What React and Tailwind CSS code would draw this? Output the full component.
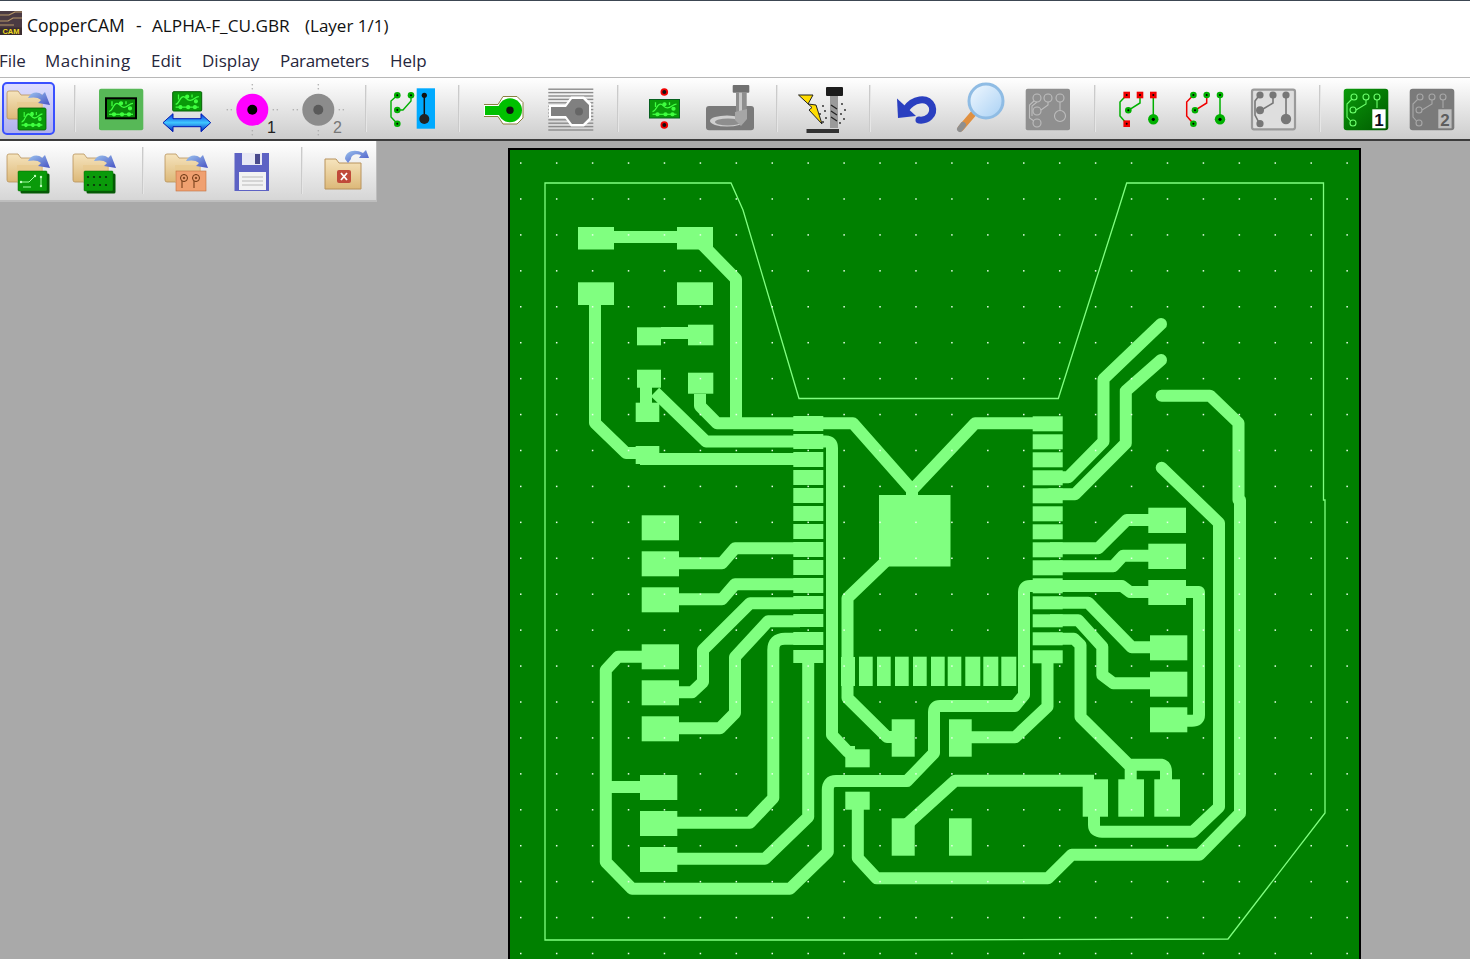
import React from "react";

const L = "#80ff80";

const traces = [
  "M595 237H695L736 279V423",
  "M595 305V423L626 453H650M640 459H800",
  "M661 333H688",
  "M646 380V412",
  "M655 392L706 441.5H800",
  "M700 394V406L717 423.3H853L912 490V497M912 490L975 423.3H1045",
  "M815 441.5H826Q832 441.5 832 448V735L848 752H855",
  "M885 562L847.5 598V698L887 737H900",
  "M679 563.3H722L735 548.3H800",
  "M679 599.3H722L735 584.3H800",
  "M679 692.3H692L703 682V650L750 603.3H800",
  "M679 728.3H720L735 713V657L768 621.3H800",
  "M677 822.7H750L773.3 798V650Q773.3 638.7 785 638.7H800",
  "M677 858.7H765L808.2 817V660",
  "M606 787H645",
  "M660 656.7H618L605.8 670V862L632 888.7H790L827.8 852V790Q827.8 781 836 781H907L934 753V712Q934 706 940 706H1015L1024 695V592Q1024 586 1030 586H1122L1130 592H1199V715Q1199 720.7 1192 720.7H1170",
  "M958 737.3H1015L1047.5 706.7V655",
  "M1050 638.7H1074L1080.5 645V717L1128.7 764.7H1161Q1166 765.8 1166 772V785M1130.7 764.7V785",
  "M1094 790V825Q1094 831.7 1102 831.7H1193L1219 807V523L1161.7 467.7",
  "M1050 477.3H1068.3L1103.5 441.5V379L1161 324",
  "M1050 494.3H1075L1125.8 443.3V391L1161 360",
  "M1050 548.3H1098.3L1126.7 520H1160",
  "M1050 566.3H1113.3L1123 555.7H1160",
  "M1050 602.7H1088.3L1131.7 647.3H1160",
  "M1050 620.3H1078.3L1102.3 646.7V675L1113.3 683.3H1160",
  "M1094 780.7H955L905 826",
  "M857.8 800V858L876.7 878.3H1048L1071.7 854.7H1199.3L1240 813.3V500L1238.5 500V423L1210 395.7H1161.7",
];

const leftSoic = [416, 434, 452, 470, 488, 506, 524, 542, 560, 578, 596, 614, 632, 650];
const heights = [15, 15, 15, 15, 15, 15, 15, 15, 15, 15, 13, 13, 13, 13];

const pads = [
  [578, 227, 36, 22.5], [677, 227, 36, 22.5], [578, 282.3, 36, 22.7], [677, 282.3, 36, 22.7],
  [637, 327.3, 24, 18], [688, 324.7, 25.3, 20.6], [637, 369.7, 24, 18], [688, 372.7, 25.3, 21],
  [635.7, 402.7, 23.6, 19.3], [635.7, 446, 23.6, 18],
  [641.7, 515.3, 37.3, 25], [641.7, 551.3, 37.3, 25], [641.7, 587.3, 37.3, 25],
  [641.7, 644.3, 37.3, 25], [641.7, 680.3, 37.3, 25], [641.7, 716.3, 37.3, 25],
  [640, 775, 37.3, 25], [640, 811, 37.3, 25], [640, 847, 37.3, 25],
  [845.3, 749.3, 24.4, 18], [845.3, 791.7, 24.4, 18],
  [879, 495, 71.5, 71.5],
  [841, 657, 14, 29],
  [859, 656.7, 13.7, 29.3], [877, 656.7, 13.7, 29.3], [895, 656.7, 13.7, 29.3], [913, 656.7, 13.7, 29.3],
  [931, 656.7, 13.7, 29.3], [947.7, 656.7, 13.6, 29.3], [965.3, 656.7, 15, 29.3], [983.3, 656.7, 15, 29.3], [1001.3, 656.7, 15, 29.3],
  [891.7, 719.3, 23, 37.4], [949, 719.3, 22.7, 37.4], [891.7, 818.3, 23, 37.4], [949, 818.3, 22.7, 37.4],
  [1082.7, 779.3, 25.3, 37.4], [1118.3, 779.3, 25.7, 37.4], [1154.3, 779.3, 25.7, 37.4],
  [1148.3, 507.7, 37.7, 25.3], [1148.3, 543.7, 37.7, 25.3], [1148.3, 580, 37.7, 25],
  [1150, 635.3, 37.3, 25], [1150, 671.7, 37.3, 25], [1150, 707.3, 37.3, 25],
];

function PcbBoard() {
  const dotsX = Array.from({ length: 24 }, (_, i) => 520.7 + i * 35.93);
  const dotsY = Array.from({ length: 23 }, (_, i) => 163 + i * 35.93);
  return (
    <svg className="block w-[849px] h-[820px]" viewBox="510 150 849 820">
      <path
        d="M545 183H731L743 210L799 398.5H1058.3L1118.3 210L1126.7 183H1323.5V500H1325V813L1228 939L885 940H545Z"
        fill="none"
        stroke={L}
        strokeWidth="1.3"
      />
      {traces.map((d, i) => (
        <path key={i} d={d} fill="none" stroke={L} strokeWidth="12" strokeLinejoin="round" strokeLinecap={i === 18 || i === 19 || i === 20 || i === 26 ? "round" : "butt"} />
      ))}
      {pads.map(([x, y, w, h], i) => (
        <rect key={i} x={x} y={y} width={w} height={h} fill={L} />
      ))}
      {leftSoic.map((y, i) => (
        <rect key={"l" + i} x={793.3} y={y} width={30} height={heights[i]} fill={L} />
      ))}
      {leftSoic.map((y, i) => (
        <rect key={"r" + i} x={1032.7} y={y + 0.3} width={30} height={heights[i]} fill={L} />
      ))}
      {dotsY.map((y) =>
        dotsX.map((x) => <rect key={x + "-" + y} x={x - 0.7} y={y - 0.7} width="1.5" height="1.5" fill="#e8ffe8" />)
      )}
    </svg>
  );
}

function Defs() {
  return (
    <svg className="block w-0 h-0">
      <defs>
        <linearGradient id="tan" x1="0" y1="0" x2="0" y2="1">
          <stop offset="0" stopColor="#f6e4bd" />
          <stop offset="1" stopColor="#dcb878" />
        </linearGradient>
        <linearGradient id="arrowb" x1="0" y1="0" x2="1" y2="1">
          <stop offset="0" stopColor="#9cc4ee" />
          <stop offset="1" stopColor="#4652c4" />
        </linearGradient>
        <linearGradient id="blueh" x1="0" y1="0" x2="0" y2="1">
          <stop offset="0" stopColor="#0030e0" />
          <stop offset="0.5" stopColor="#40c8ff" />
          <stop offset="1" stopColor="#0020c0" />
        </linearGradient>
        <linearGradient id="lens" x1="0" y1="0" x2="1" y2="1">
          <stop offset="0" stopColor="#f2f9ff" />
          <stop offset="1" stopColor="#a8d0f4" />
        </linearGradient>
        <linearGradient id="grn" x1="0" y1="0" x2="1" y2="1">
          <stop offset="0" stopColor="#0a9a0a" />
          <stop offset="1" stopColor="#005a00" />
        </linearGradient>
      </defs>
    </svg>
  );
}

/* small green circuit drawn on a board, origin x,y, 30x20 */
function Circuit({ x, y, w = 30, h = 20, stroke = "#40ff40" }) {
  return (
    <g transform={`translate(${x} ${y}) scale(${w / 30} ${h / 20})`} fill="none" stroke={stroke} strokeWidth="1.3">
      <path d="M3 13C7 13 7 5 11 5C14 5 14 9 18 9C22 9 23 5 27 5" />
      <path d="M3 16H27" />
      <path d="M6 3V8M20 3V6" />
      <circle cx="8" cy="16" r="1.5" fill={stroke} />
      <circle cx="16" cy="16" r="1.5" fill={stroke} />
      <circle cx="23" cy="16" r="1.5" fill={stroke} />
      <circle cx="15" cy="5" r="1.5" fill={stroke} />
      <circle cx="24" cy="10" r="1.5" fill={stroke} />
    </g>
  );
}

function Folder({ x, y, children }) {
  return (
    <g transform={`translate(${x} ${y})`}>
      <path d="M0 3Q0 1 2 1H11L14 5H35V29H2Q0 29 0 27Z" fill="url(#tan)" stroke="#b8935c" strokeWidth="0.8" />
      <path d="M10 12H36V29H10Z" fill="#e8c98e" opacity="0.7" />
      <path d="M21 8C24 2 31 1 35 5L38 2L43 15L31 13L34 10C31 7 26 7 21 8Z" fill="url(#arrowb)" />
      {children}
    </g>
  );
}

function Icon({ children }) {
  return (
    <svg className="block w-[66px] h-[60px]" viewBox="0 0 66 60">
      {children}
    </svg>
  );
}

function Node({ x, y, r = 3.3, fill = "#00b000", core = "#000", square, c = 1 }) {
  return (
    <g>
      {square ? <rect x={x - r} y={y - r} width={r * 2} height={r * 2} fill={fill} /> : <circle cx={x} cy={y} r={r} fill={fill} />}
      <circle cx={x} cy={y} r={c} fill={core} />
    </g>
  );
}

function Gerber({ num, main, core, text }) {
  const dots = [[0, -21], [0, -25], [0, 21], [0, 25], [-21, 0], [-25, 0], [21, 0], [25, 0]];
  return (
    <Icon>
      <g transform="translate(32.3 30.7)">
        {dots.map(([a, b], i) => (
          <circle key={i} cx={a} cy={b} r="0.8" fill="#aaa" />
        ))}
        <circle r="16" fill={main} />
        <circle r="5" fill={core} />
      </g>
      <text x="47" y="54" fontSize="16" fontFamily="'Liberation Sans', sans-serif" fill={text}>{num}</text>
    </Icon>
  );
}

function Sch({ dx = 0, mode }) {
  const red = "#f00000";
  const green = "#00b000";
  const sq = mode === "red";
  return (
    <g transform={`translate(${dx} 0)`} fill="none">
      <path d="M18.7 16L12 23V37L18.7 44.7" stroke={mode === "left" ? red : green} strokeWidth="1.5" />
      <path d="M32 16V24L20.3 31.3" stroke={mode === "left" ? red : green} strokeWidth="1.5" />
      <path d="M45.3 16V40" stroke={green} strokeWidth="1.5" />
      <Node x={18.7} y={16} square={sq} fill={sq ? red : green} />
      <Node x={32} y={16} square={sq} fill={sq ? red : green} />
      <Node x={45.3} y={16} square={sq} fill={sq ? red : green} />
      <Node x={20.3} y={31.3} />
      <Node x={18.7} y={44.7} square={sq} fill={sq ? red : green} />
      <Node x={45.3} y={40.3} r={5.2} c={1.6} />
    </g>
  );
}

function LayerIcon({ bg, line, box, num, numColor }) {
  return (
    <Icon>
      <rect x="10.7" y="9.7" width="44.6" height="41.6" rx="3" fill={bg} />
      <g fill="none" stroke={line} strokeWidth="1.1">
        <circle cx="21" cy="18" r="3" />
        <circle cx="33" cy="18" r="3" />
        <circle cx="44" cy="18" r="3" />
        <circle cx="20" cy="31" r="3" />
        <circle cx="20" cy="44" r="3" />
        <path d="M18.5 20.5L14 25V38L17.5 42M33 21V25L23 31M44 21V29" />
      </g>
      <rect x="39.3" y="30.3" width="13.3" height="19" fill={box} />
      <text x="46" y="46.5" textAnchor="middle" fontSize="17" fontWeight="700" fontFamily="'Liberation Sans', sans-serif" fill={numColor}>{num}</text>
    </Icon>
  );
}

function Sep({ w = "w-[27px]", extra = "justify-center", h = "h-[47px]" }) {
  return (
    <div className={`${w} ${extra} flex shrink-0`}>
      <div className={`w-[2px] ${h} bg-gradient-to-r from-[#bdbdbd] to-[#f4f4f4]`} />
    </div>
  );
}

function Btn({ children, active }) {
  if (active)
    return (
      <div className="w-[66px] h-[60px] shrink-0 flex items-center justify-center">
        <div className="w-[53px] h-[53px] rounded-[5px] border-2 border-[#3a50ff] bg-gradient-to-b from-[#dedeff] to-[#b0b0ec] flex items-center justify-center overflow-hidden">
          {children}
        </div>
      </div>
    );
  return <div className="w-[66px] h-[60px] shrink-0">{children}</div>;
}

function TopToolbar() {
  return (
    <div className="h-[64px] border-t border-[#b8b8b8] border-b-2 border-b-[#3c3c3c] bg-gradient-to-b from-[#ffffff] to-[#cdcdcd] flex items-center shrink-0 overflow-hidden">
      <div className="flex items-center -ml-[5px]">
        <Btn active>
          <svg className="block w-[49px] h-[49px]" viewBox="0 0 49 49">
            <Folder x={3} y={6}>
              <rect x="11" y="18" width="28" height="22" rx="1.5" fill="#0a9a0a" stroke="#065d06" strokeWidth="0.8" />
              <Circuit x={12} y={19} w={26} h={20} />
            </Folder>
          </svg>
        </Btn>
        <Sep />
        <Btn>
          <Icon>
            <rect x="11" y="9.7" width="44.3" height="41.6" rx="2" fill="#57b857" />
            <rect x="18" y="19.3" width="30" height="20" fill="#0a8a0a" stroke="#000" strokeWidth="2" />
            <Circuit x={18} y={19.3} />
          </Icon>
        </Btn>
        <Btn>
          <Icon>
            <rect x="18.7" y="12.7" width="29" height="19.3" rx="1" fill="#0a9a0a" stroke="#056005" />
            <Circuit x={18.7} y={12.7} w={29} h={19.3} />
            <path d="M9 43.7L19 34.7V39.7H47V34.7L56.7 43.7L47 52.7V47.7H19V52.7Z" fill="url(#blueh)" stroke="#0018b0" strokeWidth="1" />
          </Icon>
        </Btn>
        <Btn>
          <Gerber num="1" main="#ff00ff" core="#000" text="#222" />
        </Btn>
        <Btn>
          <Gerber num="2" main="#8c8c8c" core="#5a5a5a" text="#777" />
        </Btn>
        <Sep />
        <Btn>
          <Icon>
            <rect x="37.7" y="9.3" width="18.3" height="40.4" fill="#00aaff" />
            <path d="M45.3 16V40" stroke="#111" strokeWidth="1.5" />
            <circle cx="45.3" cy="16.3" r="2.6" fill="#111" />
            <circle cx="45.3" cy="40" r="5" fill="#222" />
            <g fill="none" stroke="#00b000" strokeWidth="1.4">
              <path d="M18.3 16.3L12 22V38L18.3 44.7" />
              <path d="M32 16.3V22L24 31H18.3" />
            </g>
            <Node x={18.3} y={16.3} />
            <Node x={32} y={16.3} />
            <Node x={18.3} y={31} />
            <Node x={18.3} y={44.7} />
          </Icon>
        </Btn>
        <Sep />
        <Btn>
          <Icon>
            <path d="M12 25.5H26L31 17.5H45L51 23.5V39L45 45H31L26 37.5H12" fill="#fff" stroke="#8a8040" strokeWidth="1" />
            <rect x="13" y="27" width="16" height="9" fill="#00c000" />
            <circle cx="38" cy="31.3" r="12" fill="#00c000" />
            <circle cx="38" cy="31.3" r="3.7" fill="#111" />
          </Icon>
        </Btn>
        <Btn>
          <Icon>
            {[0, 1, 2, 3, 4, 5, 6, 7, 8, 9, 10, 11, 12].map((i) => (
              <rect key={i} x="10.3" y={9.5 + i * 3.4} width="45" height="1.4" fill="#8c8c8c" />
            ))}
            <path d="M11 26H27L33 17.5H46L53 24V41L46 47.5H33L27 39H11Z" fill="#fff" />
            <path d="M13 28H28L34 20H45L51 26V39L45 45H34L28 37H13Z" fill="#808080" />
            <circle cx="41" cy="32.5" r="4" fill="#666" />
          </Icon>
        </Btn>
        <Sep />
        <Btn>
          <Icon>
            <rect x="18.5" y="20.5" width="30" height="18.5" fill="#0a9a0a" stroke="#06601f" />
            <Circuit x={18.5} y={20.5} w={30} h={18.5} />
            <circle cx="33.3" cy="13" r="3.8" fill="#f00000" />
            <circle cx="33.3" cy="13" r="2" fill="#111" />
            <circle cx="33.3" cy="46" r="3.8" fill="#f00000" />
            <circle cx="33.3" cy="46" r="2" fill="#111" />
          </Icon>
        </Btn>
        <Btn>
          <Icon>
            <rect x="9" y="27" width="48" height="24.3" rx="3" fill="#7a7a7a" />
            <ellipse cx="30" cy="42" rx="17" ry="5.5" fill="#cfcfcf" />
            <ellipse cx="31" cy="43" rx="13" ry="3.5" fill="#8e8e8e" />
            <rect x="35.7" y="6" width="16.6" height="7.7" rx="1" fill="#707070" />
            <rect x="39" y="13.7" width="10.7" height="25" fill="#8e8e8e" />
            <rect x="42" y="13.7" width="3" height="25" fill="#c8c8c8" />
            <path d="M38 33L50 30V40L44 47L38 41Z" fill="#a6a6a6" />
          </Icon>
        </Btn>
        <Sep />
        <Btn>
          <Icon>
            <path d="M8.5 16H23L18 25L26 26L32 45L19 31L22 28.5Z" fill="#ffdc00" stroke="#222" strokeWidth="1" />
            <rect x="36" y="8" width="17" height="9" rx="1" fill="#1c1c1c" />
            <rect x="40" y="17" width="8" height="32" fill="#9a9a9a" />
            <path d="M41 26L47 30M41 32L47 36M41 38L47 42" stroke="#222" strokeWidth="1.2" />
            <rect x="16.5" y="50" width="32.5" height="4" fill="#333" />
            {[[33, 27], [35, 32], [30, 35], [36, 39], [33, 43], [52, 25], [55, 31], [51, 35], [54, 40], [50, 44]].map(([a, b], i) => (
              <circle key={i} cx={a} cy={b} r="0.9" fill="#222" />
            ))}
          </Icon>
        </Btn>
        <Sep />
        <Btn>
          <Icon>
            <path d="M23 30C30 20 44 17 49 27C52 36 44 42 36 41" fill="none" stroke="#2a3fc0" strokeWidth="7" strokeLinecap="round" />
            <path d="M14 19.5L15 39L33 37Z" fill="#2a3fc0" />
          </Icon>
        </Btn>
        <Btn>
          <Icon>
            <path d="M24 35L12 49" stroke="#e09040" strokeWidth="6.5" strokeLinecap="round" />
            <path d="M14 46L11 50" stroke="#8f8f8f" strokeWidth="6" strokeLinecap="round" />
            <circle cx="37" cy="22" r="17" fill="url(#lens)" stroke="#8fbce4" strokeWidth="3" />
          </Icon>
        </Btn>
        <Btn>
          <Icon>
            <rect x="10.7" y="9.7" width="44.3" height="41.6" rx="2" fill="#8f8f8f" />
            <g fill="none" stroke="#bdbdbd" strokeWidth="1.1">
              <circle cx="22" cy="19" r="4" />
              <circle cx="33" cy="19" r="4" />
              <circle cx="45" cy="19" r="4" />
              <circle cx="22" cy="32" r="4" />
              <circle cx="22" cy="44" r="4" />
              <circle cx="45" cy="37" r="5.5" />
              <path d="M19 22L14.5 26V39L19 42M33 23V26L26 31M45 23V31" />
              <path d="M22 23L17 27V37" />
            </g>
          </Icon>
        </Btn>
        <Sep />
        <Btn>
          <Icon>
            <Sch mode="red" />
          </Icon>
        </Btn>
        <Btn>
          <Icon>
            <Sch mode="left" dx={0.7} />
          </Icon>
        </Btn>
        <Btn>
          <Icon>
            <rect x="12" y="10.7" width="43" height="39.6" rx="2" fill="#dedede" stroke="#9a9a9a" strokeWidth="2.2" />
            <g fill="none" stroke="#777" strokeWidth="1.6">
              <path d="M19.5 16L15 22V36L19.5 44.7" />
              <path d="M33 16V24L21 31.3" />
              <path d="M46 16V40" />
            </g>
            <g fill="#777">
              <circle cx="20" cy="16" r="3.6" />
              <circle cx="33" cy="16" r="3.6" />
              <circle cx="46" cy="16" r="3.6" />
              <circle cx="20" cy="31.3" r="4" />
              <circle cx="20" cy="44.7" r="3.6" />
              <circle cx="46" cy="40" r="5.2" />
            </g>
          </Icon>
        </Btn>
        <Sep />
        <Btn>
          <LayerIcon bg="url(#grn)" line="#6cff6c" box="#ffffff" num="1" numColor="#0b0b20" />
        </Btn>
        <Btn>
          <LayerIcon bg="#7a7a7a" line="#a8a8a8" box="#bcbcbc" num="2" numColor="#5e5e5e" />
        </Btn>
      </div>
    </div>
  );
}

function DarkBoard({ children }) {
  return (
    <g>
      <rect x="13.5" y="20.5" width="29" height="20" rx="1.5" fill="#055805" />
      <rect x="11" y="18" width="29" height="20" rx="1" fill="#0a9a0a" stroke="#076507" strokeWidth="0.5" />
      {children}
    </g>
  );
}

function SecondToolbar() {
  return (
    <div className="w-[377px] h-[61px] border-r border-b-2 border-[#bdbdbd] bg-gradient-to-b from-[#ffffff] to-[#d6d6d6] flex items-center overflow-hidden">
      <div className="flex items-center -ml-[4px]">
        <Btn>
          <Icon>
            <Folder x={11} y={12}>
              <DarkBoard>
                <path d="M14 29H22L28 23M34 24V33M16 34H24" stroke="#a0ffa0" strokeWidth="1" fill="none" />
                <circle cx="14" cy="29" r="1.2" fill="#c0ffc0" />
                <circle cx="28" cy="23" r="1.2" fill="#c0ffc0" />
                <circle cx="34" cy="24" r="1.2" fill="#c0ffc0" />
                <circle cx="34" cy="33" r="1.2" fill="#c0ffc0" />
              </DarkBoard>
            </Folder>
          </Icon>
        </Btn>
        <Btn>
          <Icon>
            <Folder x={11} y={12}>
              <DarkBoard>
                {[15, 21, 27, 33].map((x) => (
                  <circle key={x} cx={x} cy="24" r="1.1" fill="#0a2a0a" />
                ))}
                {[15, 21, 27, 33].map((x) => (
                  <circle key={x} cx={x} cy="32" r="1.1" fill="#0a2a0a" />
                ))}
              </DarkBoard>
            </Folder>
          </Icon>
        </Btn>
        <Sep w="w-[26px]" extra="pl-[14px]" />
        <Btn>
          <Icon>
            <Folder x={11} y={12}>
              <rect x="11" y="18" width="30" height="20" fill="#f0a070" stroke="#c07040" strokeWidth="0.6" />
              <g fill="none" stroke="#6a3410" strokeWidth="1">
                <circle cx="19" cy="25" r="3.5" />
                <circle cx="31" cy="25" r="3.5" />
                <path d="M17 28V35M29 28V35" />
                <circle cx="19" cy="25" r="0.8" />
                <circle cx="31" cy="25" r="0.8" />
              </g>
            </Folder>
          </Icon>
        </Btn>
        <Btn>
          <Icon>
            <path d="M14.5 12H49V50H14.5Z" fill="#5d62c4" />
            <path d="M22 12H42V24H22Z" fill="#e8e8f4" />
            <path d="M35 13H40V23H35Z" fill="#4a4a8c" />
            <path d="M19 31H46V49H19Z" fill="#f2f2f2" />
            <path d="M22 36H43M22 40H43M22 44H43" stroke="#b8b8b8" strokeWidth="1" />
          </Icon>
        </Btn>
        <Sep w="w-[26px]" extra="pl-[15px]" />
        <Btn>
          <Icon>
            <path d="M13 18H24L27 22H49V48H13Z" fill="url(#tan)" stroke="#b8935c" strokeWidth="1" />
            <path d="M33 18C33 11 42 7 51 12L54 9L57 17H47L49 14C44 12 39 14 39 18L36 22Z" fill="url(#arrowb)" />
            <rect x="25" y="29" width="14" height="13" rx="2" fill="#c04a3a" />
            <path d="M29 32L35 39M35 32L29 39" stroke="#fff" strokeWidth="1.8" />
          </Icon>
        </Btn>
      </div>
    </div>
  );
}

export default function App() {
  const fontUi = "font-['Open_Sans','Noto_Sans',sans-serif]";
  return (
    <div className="w-[1470px] h-[959px] overflow-hidden bg-[#a9a9a9] flex flex-col">
      <Defs />
      <div className={`h-[44px] shrink-0 bg-white border-t border-[#3c4652] flex items-center text-[17.5px] text-[#111] ${fontUi}`}>
        <svg className="block w-[22px] h-[24px] shrink-0 mt-[1px]" viewBox="0 0 22 24">
          <rect width="22" height="24" fill="#4a3a42" />
          <path d="M0 4H9L15 1H22M0 10H8L13 7H22M0 14H14" stroke="#b89868" strokeWidth="1.2" fill="none" />
          <rect y="16.5" width="22" height="7.5" fill="#3a2c30" />
          <text x="11" y="23" textAnchor="middle" fontSize="7.5" fontWeight="700" fontFamily="'Liberation Sans', sans-serif" fill="#f0dc20">CAM</text>
        </svg>
        <div className="ml-[5px] mt-[5px] flex items-baseline whitespace-pre">
          <span className="w-[109px]">CopperCAM</span>
          <span className="w-[16px]">-</span>
          <span className="w-[153px] text-[17.2px]">ALPHA-F_CU.GBR</span>
          <span className="text-[17px]">(Layer 1/1)</span>
        </div>
      </div>
      <div className={`h-[33px] shrink-0 bg-white flex items-center gap-[21px] -ml-[1px] text-[17px] text-[#26263c] pt-[1px] ${fontUi}`}>
        <span className="w-[25px]">File</span>
        <span className="w-[85px] tracking-[0.4px]">Machining</span>
        <span className="w-[30px]">Edit</span>
        <span className="w-[57px]">Display</span>
        <span className="w-[89px] tracking-[-0.3px]">Parameters</span>
        <span className="w-[37px]">Help</span>
      </div>
      <TopToolbar />
      <div className="flex h-[830px] shrink-0 items-start">
        <div className="w-[377px] shrink-0">
          <SecondToolbar />
        </div>
        <div className="ml-[131px] mt-[7px] w-[853px] h-[824px] border-2 border-black bg-[#008000] shrink-0 overflow-hidden">
          <PcbBoard />
        </div>
      </div>
    </div>
  );
}
